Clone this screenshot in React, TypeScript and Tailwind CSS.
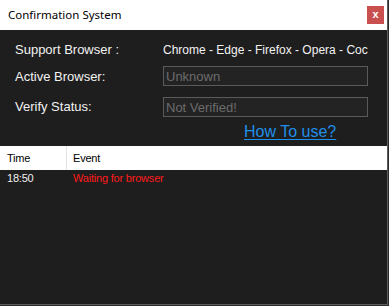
import React from "react";

const sans = { fontFamily: '"Liberation Sans", Arial, sans-serif' };

const Field = ({ value }: { value: string }) => (
  <div className="w-[205px] h-[20px] border border-[#5a5a5a] bg-[#232323] flex items-center pl-[2px] text-[13px] text-[#6c6c6c] leading-none">
    {value}
  </div>
);

export default function App() {
  return (
    <div className="w-[389px] h-[306px] bg-[#2b2b2b]" style={sans}>
      <div className="w-[388px] h-[305px] flex flex-col bg-[#1e1e1e] border-r border-b border-[#5c5c5c] overflow-hidden">
        {/* title bar */}
        <div className="h-[30px] shrink-0 bg-white flex items-center justify-between pl-[8px] pr-[3px]">
          <span className="text-[11.5px] text-black" style={{ fontFamily: '"Noto Sans", sans-serif' }}>
            Confirmation System
          </span>
          <div className="w-[17px] h-[18px] bg-[#c9504f] text-white font-bold text-[11px] flex items-center justify-center leading-none pb-[2px]">
            x
          </div>
        </div>

        {/* info */}
        <div className="flex flex-col pl-[15px] pt-[10px] text-[#f2f2f2]">
          <div className="h-[20px] flex items-center">
            <span className="w-[148px] text-[13px]">Support Browser :</span>
            <span className="w-[205px] text-[12px] whitespace-nowrap overflow-hidden">
              Chrome - Edge - Firefox - Opera - Coc
            </span>
          </div>
          <div className="h-[20px] mt-[6px] flex items-center">
            <span className="w-[148px] text-[13px] pt-[2px]">Active Browser:</span>
            <Field value="Unknown" />
          </div>
          <div className="h-[20px] mt-[11px] flex items-center">
            <span className="w-[148px] text-[13px]">Verify Status:</span>
            <Field value="Not Verified!" />
          </div>
          <div className="mt-[3px] h-[18px] pl-[229px]">
            <span className="text-[16px] leading-[18px] text-[#1e8fea] underline underline-offset-[2px]">How To use?</span>
          </div>
        </div>

        {/* list view */}
        <div className="mt-[8px] flex flex-col text-[11px] tracking-[-0.2px]">
          <div className="h-[24px] bg-white text-black flex items-center">
            <span className="w-[66px] pl-[7px]">Time</span>
            <span className="w-px h-full bg-[#e3e3e3]" />
            <span className="pl-[6px]">Event</span>
          </div>
          <div className="h-[17px] flex items-center">
            <span className="w-[67px] pl-[7px] text-[#f0f0f0]">18:50</span>
            <span className="pl-[6px] text-[#ff1a1a]">Waiting for browser</span>
          </div>
        </div>
      </div>
    </div>
  );
}
